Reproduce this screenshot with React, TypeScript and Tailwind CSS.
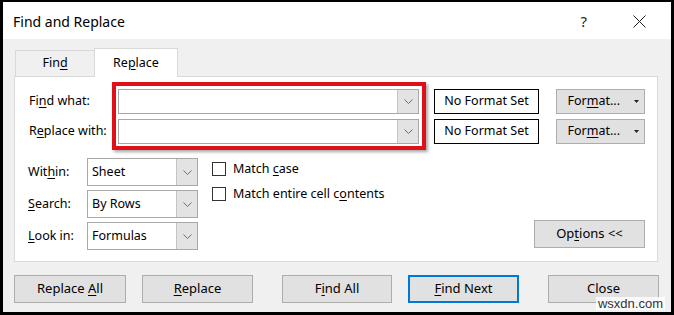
const FONT = "font-['Segoe_UI','Noto_Sans',sans-serif]"

function U({ children }: { children: string }) {
  return <span className="underline underline-offset-2 decoration-1">{children}</span>
}

function Chevron() {
  return (
    <svg width="9" height="5" viewBox="0 0 9 5" className="block">
      <polyline points="0.5,0.5 4.5,4.5 8.5,0.5" fill="none" stroke="#6d6d6d" strokeWidth="1" />
    </svg>
  )
}

function Combo({ w, h, value }: { w: string; h: string; value?: string }) {
  return (
    <div className={`flex ${w} ${h} bg-white border border-[#a8a8a8]`}>
      <div className="flex-1 flex items-center pl-[4px] text-[12.5px] text-black">{value}</div>
      <div className="w-[21px] flex items-center justify-center bg-[#e3e3e3] border-l border-[#c4c4c4]">
        <Chevron />
      </div>
    </div>
  )
}

function Button({ className, children }: { className: string; children: React.ReactNode }) {
  return (
    <div className={`flex items-center justify-center h-[28px] bg-[#e1e1e1] border border-[#adadad] text-[13px] text-black ${className}`}>
      <span>{children}</span>
    </div>
  )
}

function FormatButton() {
  return (
    <div className="ml-[17px] w-[89px] h-[25px] flex items-center justify-end pr-[5px] bg-[#e1e1e1] border border-[#adadad] text-[12.5px] text-black">
      <span>For<U>m</U>at...</span>
      <svg width="5" height="3" viewBox="0 0 5 3" className="ml-[14px]">
        <polygon points="0,0 5,0 2.5,3" fill="#222" />
      </svg>
    </div>
  )
}

function Check({ children }: { children: React.ReactNode }) {
  return (
    <div className="flex items-center h-[14px]">
      <div className="w-[14px] h-[14px] bg-white border border-[#333]" />
      <span className="ml-[7px] text-[12.5px] text-black">{children}</span>
    </div>
  )
}

export default function App() {
  return (
    <div className={`w-[674px] h-[315px] bg-black pt-[2px] px-[3px] pb-[3px] ${FONT}`}>
      <div className="relative w-full h-full bg-[#f0f0f0] flex flex-col">
        {/* title bar */}
        <div className="h-[37px] bg-white flex items-center pl-[10px] pt-px">
          <span className="text-[14px] text-black">Find and Replace</span>
          <span className="ml-auto text-[15px] text-[#222]">?</span>
          <svg width="13" height="13" viewBox="0 0 13 13" className="ml-[46px] mr-[25px]">
            <path d="M0.5 0.5 L12.5 12.5 M12.5 0.5 L0.5 12.5" stroke="#222" strokeWidth="1" />
          </svg>
        </div>

        {/* tabs */}
        <div className="flex items-end h-[37px] pl-[12px]">
          <div className="w-[79px] h-[26px] flex items-center justify-center border-t border-l border-[#d9d9d9] text-[12.5px] text-black">
            <span>Fin<U>d</U></span>
          </div>
          <div className="w-[84px] h-[29px] -mb-px z-10 flex items-start pt-[5px] justify-center bg-white border-t border-l border-r border-[#d9d9d9] text-[12.5px] text-black">
            <span>Re<U>p</U>lace</span>
          </div>
        </div>

        {/* panel */}
        <div className="relative ml-[11px] mr-[13px] h-[186px] bg-white border border-[#d9d9d9]">
          <div className="flex items-center pl-[14px] mt-[12px] h-[25px]">
            <span className="w-[89px] text-[12.5px] text-black">Fi<U>n</U>d what:</span>
            <Combo w="w-[301px]" h="h-[25px]" />
            <div className="ml-[15px] w-[105px] h-[25px] flex items-center justify-center border border-black text-[12.5px] text-black">No Format Set</div>
            <FormatButton />
          </div>
          <div className="flex items-center pl-[14px] mt-[5px] h-[25px]">
            <span className="w-[89px] text-[12.5px] text-black">R<U>e</U>place with:</span>
            <Combo w="w-[301px]" h="h-[25px]" />
            <div className="ml-[15px] w-[105px] h-[25px] flex items-center justify-center border border-black text-[12.5px] text-black">No Format Set</div>
            <FormatButton />
          </div>

          <div className="flex mt-[14px] h-[92px]">
            <div className="flex flex-col gap-[4px] pl-[13px]">
              <div className="flex items-center h-[28px]">
                <span className="w-[59px] text-[12.5px] text-black">Wit<U>h</U>in:</span>
                <Combo w="w-[111px]" h="h-[28px]" value="Sheet" />
              </div>
              <div className="flex items-center h-[28px]">
                <span className="w-[59px] text-[12.5px] text-black"><U>S</U>earch:</span>
                <Combo w="w-[111px]" h="h-[28px]" value="By Rows" />
              </div>
              <div className="flex items-center h-[28px]">
                <span className="w-[59px] text-[12.5px] text-black"><U>L</U>ook in:</span>
                <Combo w="w-[111px]" h="h-[28px]" value="Formulas" />
              </div>
            </div>
            <div className="flex flex-col gap-[11px] ml-[14px] pt-[4px]">
              <Check>Match <U>c</U>ase</Check>
              <Check>Match entire cell c<U>o</U>ntents</Check>
            </div>
            <Button className="ml-auto self-end mb-[2px] mr-[12px] w-[111px]">
              Op<U>t</U>ions &lt;&lt;
            </Button>
          </div>

          {/* highlight box */}
          <div className="absolute left-[97px] top-[5px] w-[314px] h-[68px] border-[4px] border-[#e0101a] shadow-[2px_2px_3px_rgba(0,0,0,0.35)] pointer-events-none" />
        </div>

        {/* bottom buttons */}
        <div className="flex mt-[13px] pl-[11px]">
          <Button className="w-[112px]">Replace <U>A</U>ll</Button>
          <Button className="ml-[16px] w-[111px]"><U>R</U>eplace</Button>
          <Button className="ml-[29px] w-[110px]">F<U>i</U>nd All</Button>
          <Button className="ml-[16px] w-[111px] !border-2 !border-[#0078d7]"><U>F</U>ind Next</Button>
          <Button className="ml-[29px] w-[111px]">Close</Button>
        </div>

        <span className="absolute right-[6px] bottom-[2px] px-[2px] bg-white/80 text-[13px] leading-[13px] text-[#333] font-['Liberation_Sans',sans-serif]">wsxdn.com</span>
      </div>
    </div>
  )
}
